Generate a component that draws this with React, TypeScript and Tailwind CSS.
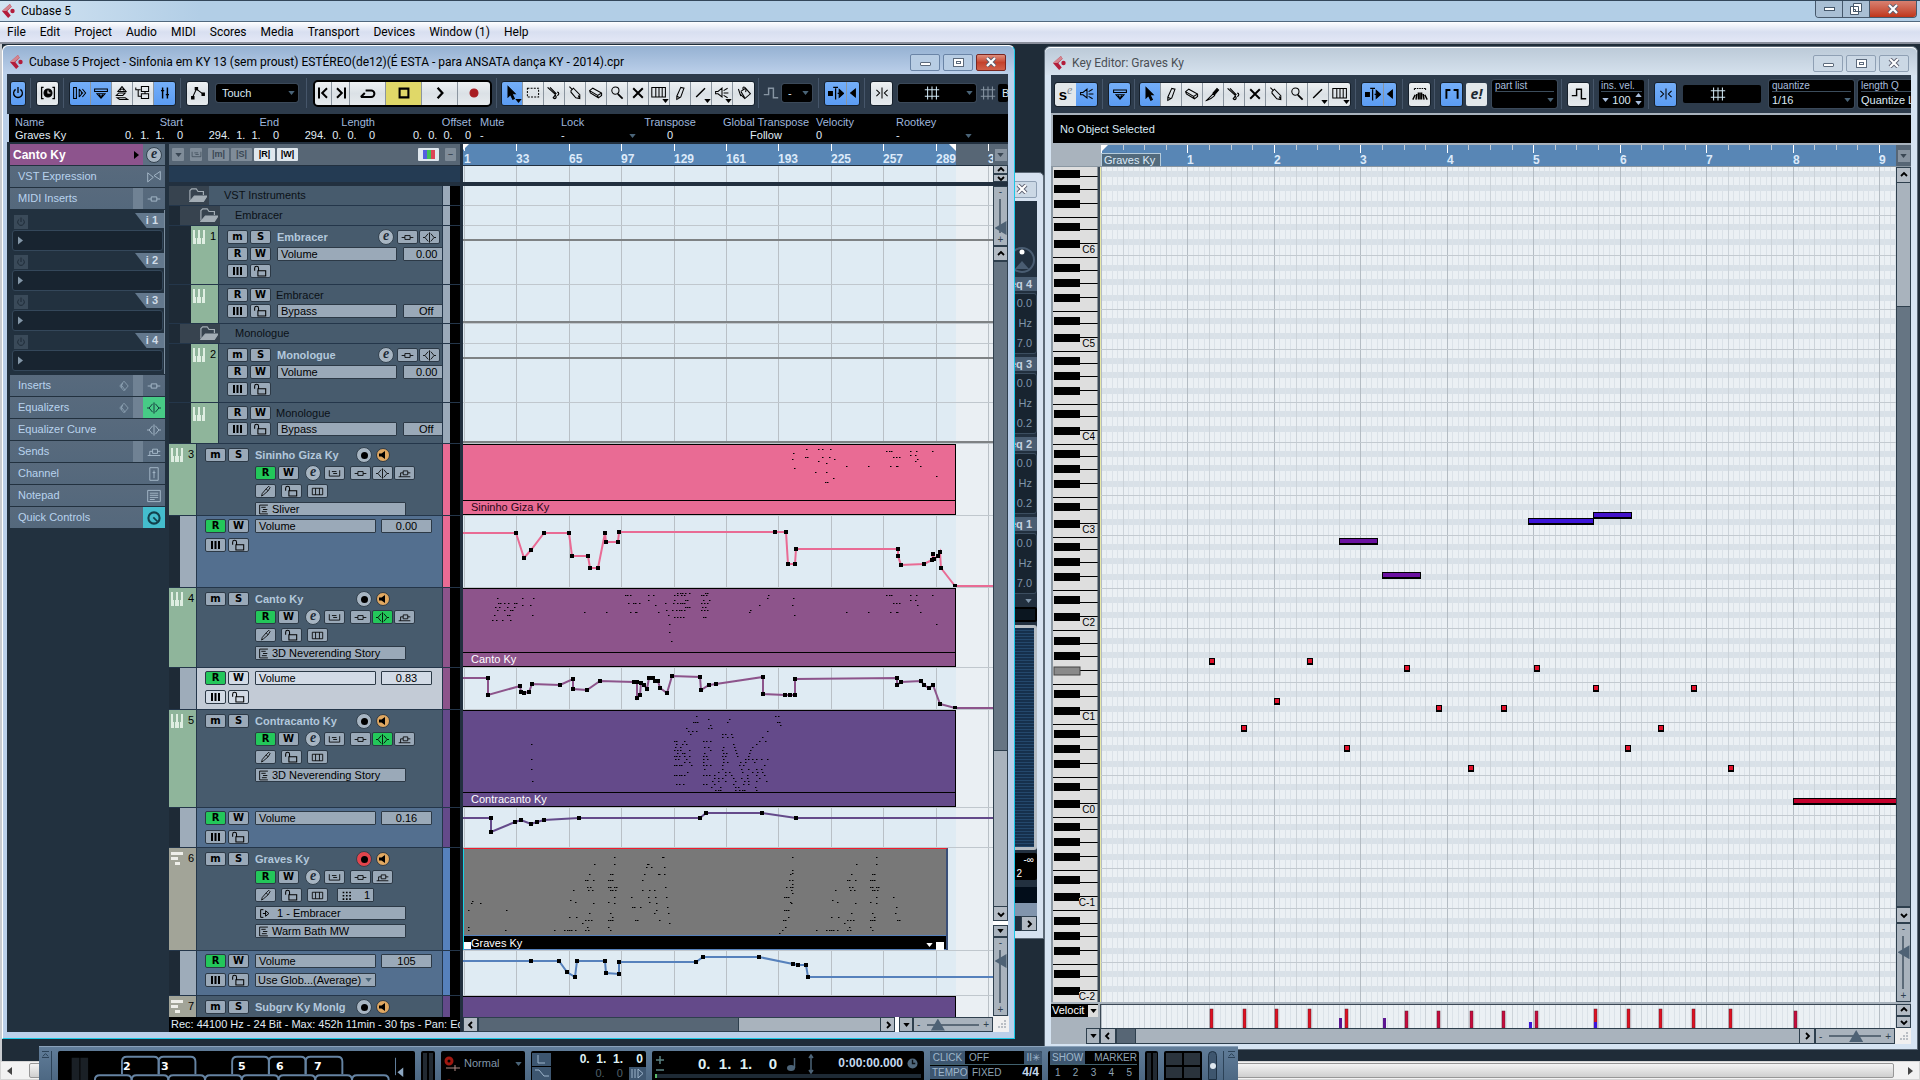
import type { ReactNode } from 'react'
import clsx from 'clsx'

type Point = [number, number]

const menus = ['File', 'Edit', 'Project', 'Audio', 'MIDI', 'Scores', 'Media', 'Transport', 'Devices', 'Window (1)', 'Help']

/* ---------- icons ---------- */

const icons: Record<string, ReactNode> = {
  power: <path d="M7 5.500a5.500 5.500 0 1 0 6 0M10 2.500v7.500" strokeWidth="1.600" />,
  clock: (
    <>
      <path d="M4.500 3H2v14h2.500M15.500 3H18v14h-2.500" strokeWidth="1.600" />
      <circle cx="10" cy="10" r="5" fill="currentColor" />
      <path d="M10 7v3h3" stroke="#fff" />
    </>
  ),
  inspector: <path d="M2 3h3.500v14H2zM9 5v10M9 5l4 5-4 5M13 5l4 5-4 5M11 10h3" />,
  info: <path d="M2 5h16v3H2zM5 11h10l-5 5.500zM8 12a2 2 0 0 0 4 0" />,
  overview: <path d="M5 8l5-6 5 6zM8 7a2 2 0 0 1 4 0M3 13l3-3h8l-3 3zM4 16h10l3 2H7z" />,
  pool: <path d="M1 3v3h6M4 6v8h4M8 2h9v6H8zM8 11h9v6H8zM12.500 8v3" />,
  mixer: <path d="M7 3v14M13 3v14M5 7h4M11 12h4" strokeWidth="1.800" />,
  auto: (
    <>
      <path d="M3 16L8 5l8 6" />
      <path d="M2 14.500h3v3H2zM6.500 3h3v3h-3zM15 10h3v3h-3z" fill="currentColor" />
    </>
  ),
  prev: <path d="M5 3v14M15 4l-6 6 6 6" strokeWidth="2.500" />,
  next: <path d="M15 3v14M5 4l6 6-6 6" strokeWidth="2.500" />,
  loop: <path d="M1 15h13a4 4 0 0 0 0-8H7M6 10l-5 5" strokeWidth="2.500" />,
  stop: <path d="M4.500 4.500h11v11h-11z" strokeWidth="2.600" />,
  play: <path d="M7 3.500l6 6.500-6 6.500" strokeWidth="2.800" />,
  record: <circle cx="10" cy="10" r="5" fill="#a81c22" stroke="#a81c22" />,
  arrow: <path d="M5 2v13l3-3 3 6 2-1-3-6h4z" fill="currentColor" />,
  range: <path d="M3 4h14v11H3z" strokeDasharray="2.500 1.500" />,
  split: <path d="M2 3l10 9M5 3l8 8M14 9a2 2 0 1 1-.1 4M11 13a2 2 0 1 1-2 3l3-4" strokeWidth="1.500" />,
  glue: <path d="M3 2l4 4M5 7l3-3 8 8v5l-5-1-6-7zM14 13l2 4" />,
  erase: <path d="M2 7l4-3 11 6v3l-4 3L3 10zM2 7l10 6 5-3M12 13l1 3" />,
  zoom: (
    <>
      <circle cx="8" cy="7" r="4.500" />
      <path d="M11 11l6 6" strokeWidth="2.200" />
    </>
  ),
  mute: <path d="M4 4l12 12M16 4L4 16" strokeWidth="2.400" />,
  warp: <path d="M1 3h17v12H1zM6 3v12M10 3v12M14 3v12" />,
  pencil: <path d="M8 17l-2 1v-4l5-11 4 1-4 11zM6 14l4 2" />,
  line: <path d="M4 15L15 4" strokeWidth="1.800" />,
  speaker: <path d="M2 8h3l5-4v11l-5-4H2zM12 7l5-3M12 10h6M12 13l5 3" />,
  bucket: <path d="M3 5l3 9M6 8l6-4 6 7-7 6-6-6M6 8l5 8M9 6c-2-6 5-4 3 3" />,
  step: <path d="M1 12h6V4h6v12h6" strokeWidth="1.800" />,
  scroll: (
    <>
      <path d="M0 8h5.500v5H0zM14 5.500l5.500 5-5.500 5z" fill="currentColor" />
      <path d="M9.500 4v14M6.500 3h6M12 10.500h2" strokeWidth="1.600" />
    </>
  ),
  left: <path d="M13 5v10l-6-5z" fill="currentColor" />,
  snap: <path d="M10 3v14M3 6l4 4-4 4M17 6l-4 4 4 4" />,
  grid: <path d="M4.500 2v16M10 2v16M15.500 2v16M1 6h18M1 14h18" />,
  knife: (
    <>
      <path d="M2 18l8-8 2 2c-3 3-6 5-10 6z" />
      <path d="M10 9l5-6 2 2-5 6z" fill="currentColor" />
    </>
  ),
  chords: (
    <>
      <path d="M3 3h14M3 3v3M17 3v3" strokeDasharray="2 1" />
      <path d="M1 17l3-6M5 17l1-7M8 17V8M12 17V8M15 17l-1-7M19 17l-3-6M10 17V8" strokeWidth="1.800" />
    </>
  ),
  parts: <path d="M3 16V5h5M17 16V5h-5" strokeWidth="2.400" />,
  insert: <path d="M1 10h5M14 10h5M6 7h8v6H6z" />,
  eq: <path d="M10 2v16M8 4l-5 6 5 6M12 4l5 6-5 6M0 10h3M17 10h3" />,
  send: <path d="M1 15h18M4 15V9h4M8 6h7v6H8zM15 9h4" />,
  lanes: <path d="M2 5v9h16V5M6 7h7M8 10h6" />,
  brush: <path d="M4 17l1-4 6-7 3 3-7 6zM11 6l4-4 2 2-3 5" />,
  lock: <path d="M1 9V5a3 3 0 0 1 6 0v3M6 9h12v8H6z" strokeWidth="1.600" />,
  film: <path d="M2 5h16v10H2zM7 5v10M13 5v10" />,
  preset: <path d="M18 2H3v16h15M6 6h8M9 10h8M7 14h9" strokeWidth="1.600" />,
  output: <path d="M8 3H3v14h5M7 10h6M12 5l6 5-6 5z" strokeWidth="1.800" />,
  dots: <path d="M3 3h3v3H3zM9 3h3v3H9zM15 3h3v3h-3zM3 9h3v3H3zM9 9h3v3H9zM15 9h3v3h-3zM3 15h3v3H3zM9 15h3v3H9zM15 15h3v3h-3z" fill="currentColor" stroke="none" />,
  folder: (
    <>
      <path d="M1 15V4l2-2h5l2 3h6v4" />
      <path d="M1 16l5-6h14l-4 6z" fill="currentColor" />
    </>
  ),
  expression: <path d="M1 4v13l8-6.500zM19 2v12l-9-6z" />,
  bypass: <path d="M10 2l7 8-7 8-7-8zM6 7v6M8 5l-2 4 6 8" />,
  channel: <path d="M4 1h12v18H4zM10 5v11M8 8h4" />,
  notes: <path d="M1 2h18v16H1zM4 6h12M4 9h12M4 12h12M4 15h7" />,
  knob: (
    <>
      <circle cx="10" cy="10" r="8" strokeWidth="3" />
      <path d="M9 9l6 6" strokeWidth="2.500" />
    </>
  ),
}

function Icon({ name, className = 'size-4' }: { name: string; className?: string }) {
  return (
    <svg viewBox="0 0 20 20" className={clsx('shrink-0', className)} fill="none" stroke="currentColor" strokeWidth="1.300" aria-hidden="true">
      {icons[name]}
    </svg>
  )
}

function Caret({ className = 'text-[#4a6478]' }: { className?: string }) {
  return (
    <svg viewBox="0 0 8 5" className={clsx('h-[4px] w-[7px] shrink-0', className)} aria-hidden="true">
      <path d="M0 0h8L4 5z" fill="currentColor" />
    </svg>
  )
}

function Logo() {
  return (
    <svg viewBox="0 0 16 16" className="size-[14px] shrink-0" aria-hidden="true">
      <path d="M9 0L0 8l7 8 3-3-4-5 5-5z" fill="#b31d3b" />
      <path d="M9 0L0 8h5l6-5z" fill="#d4868f" />
      <circle cx="12" cy="8" r="2.500" fill="#b31d3b" />
    </svg>
  )
}

function Piano() {
  return (
    <svg viewBox="0 0 12 14" className="h-[14px] w-3 shrink-0" aria-hidden="true">
      <path d="M0 0h2v8h1v6H0zM4 8h1V0h2v8h1v6H4zM9 8h1V0h2v14H9z" fill="#dfeee2" />
    </svg>
  )
}

/* ---------- window parts ---------- */

function Cell({ icon, on, className, drop }: { icon: string; on?: boolean; className?: string; drop?: boolean }) {
  return (
    <button
      aria-label={icon}
      className={clsx(
        'relative flex h-[23px] items-center justify-center border-r border-[#8b959f] text-black last:border-r-0',
        on ? 'bg-linear-to-b from-[#74aef8] to-[#5b9cf3]' : 'bg-linear-to-b from-[#eef1f3] via-[#dbe1e6] to-[#e6eaed]',
        className ?? 'w-[21px]',
      )}
    >
      <Icon name={icon} />
      {drop && <Caret className="absolute right-0 bottom-[2px] text-black" />}
    </button>
  )
}

function Group({ children, className }: { children: ReactNode; className?: string }) {
  return <div className={clsx('flex shrink-0 overflow-hidden rounded-[2px] outline outline-[#16202b]', className)}>{children}</div>
}

function Sep({ className = 'mr-[6px] ml-[5px]' }: { className?: string }) {
  return <span className={clsx('h-[30px] w-px shrink-0 bg-[#46566a]', className)} />
}

function DropBox({ label, options, className }: { label: string; options: string[]; className?: string }) {
  return (
    <div className={clsx('relative flex h-[18px] shrink-0 items-center rounded-[2px] bg-black outline outline-[#3b4959]', className)}>
      <select aria-label={label} className="h-full w-full appearance-none bg-transparent pl-[6px] text-[11px] text-[#dbe9f4]">
        {options.map((option) => (
          <option key={option}>{option}</option>
        ))}
      </select>
      <Caret className="absolute right-[3px] text-[#4a6478]" />
    </div>
  )
}

function StackedDrop({ label, value, className }: { label: string; value: string; className?: string }) {
  return (
    <label className={clsx('relative flex h-[28px] shrink-0 flex-col rounded-[2px] bg-black px-[3px] text-[10px] leading-[11px] text-[#a9bedd] outline outline-[#3b4959]', className)}>
      <span className="whitespace-nowrap border-b border-[#3c4d5c]">{label}</span>
      <select className="h-[16px] w-full appearance-none bg-transparent text-[11px] text-[#dbe9f4]">
        <option>{value}</option>
      </select>
      <Caret className="absolute right-[3px] bottom-[6px] text-[#4a6478]" />
    </label>
  )
}

function WindowButtons({ active }: { active?: boolean }) {
  const base = 'flex h-[17px] w-[30px] items-center justify-center rounded-[2px] border'
  const plain = active ? 'border-[#6a84a6] bg-[#b8cde4]' : 'border-[#8fa0b4] bg-[#cbd8e5]'
  return (
    <div className="ml-auto flex gap-[3px]">
      <button aria-label="Minimize" className={clsx(base, plain)}>
        <span className="mt-1 h-[4px] w-[11px] rounded-[1px] border border-[#5c6a7c] bg-white" />
      </button>
      <button aria-label="Maximize" className={clsx(base, plain)}>
        <span className="flex h-[9px] w-[11px] items-center justify-center border border-[#5c6a7c] bg-white">
          <span className="h-[3px] w-[5px] border border-[#5c6a7c]" />
        </span>
      </button>
      <button aria-label="Close" className={clsx(base, active ? 'border-[#7a2620] bg-linear-to-b from-[#dd8d7c] via-[#c4422c] to-[#d0604a]' : plain)}>
        <CloseMark />
      </button>
    </div>
  )
}

function CloseMark() {
  return (
    <svg viewBox="0 0 12 10" className="h-[10px] w-3" aria-hidden="true">
      <path d="M2 1l8 8M10 1L2 9" stroke="#5c5f70" strokeWidth="4" />
      <path d="M2 1l8 8M10 1L2 9" stroke="#fff" strokeWidth="2.200" />
    </svg>
  )
}

function ScrollButton({ dir, className }: { dir: 'up' | 'down' | 'left' | 'right'; className?: string }) {
  const paths = { up: 'M2 6l3-3 3 3', down: 'M2 4l3 3 3-3', left: 'M6 2L3 5l3 3', right: 'M4 2l3 3-3 3' }
  return (
    <button aria-label={'Scroll ' + dir} className={clsx('flex shrink-0 items-center justify-center border border-[#2e3f4d] bg-[#b3bbc4]', className)}>
      <svg viewBox="0 0 10 10" className="size-[10px]" fill="none" stroke="#000" strokeWidth="1.800" aria-hidden="true">
        <path d={paths[dir]} />
      </svg>
    </button>
  )
}

function ZoomV({ className, value }: { className?: string; value: number }) {
  return (
    <div className={clsx('relative flex shrink-0 flex-col items-center border border-[#2e3f4d] bg-[#a9b3bd] text-[10px] leading-[10px] text-[#2e3f4d]', className)}>
      <span className="absolute inset-y-[12px] left-[5px] w-[2px] bg-[#5b6a78]" />
      <span>-</span>
      <input
        type="range"
        aria-label="Vertical zoom"
        defaultValue={value}
        className="relative min-h-0 w-[13px] flex-1 appearance-none bg-transparent [writing-mode:vertical-lr] [&::-webkit-slider-thumb]:h-[14px] [&::-webkit-slider-thumb]:w-[12px] [&::-webkit-slider-thumb]:appearance-none [&::-webkit-slider-thumb]:bg-[#4e6275] [&::-webkit-slider-thumb]:[clip-path:polygon(0_50%,100%_0,100%_100%)]"
      />
      <span>+</span>
    </div>
  )
}

function ZoomH({ value }: { value: number }) {
  return (
    <div className="relative flex w-[80px] shrink-0 items-center justify-between border border-[#2e3f4d] bg-[#a9b3bd] px-[3px] text-[10px] text-[#2e3f4d]">
      <span className="absolute inset-x-[13px] top-[6px] h-[2px] bg-[#5b6a78]" />
      <span>-</span>
      <input
        type="range"
        aria-label="Horizontal zoom"
        defaultValue={value}
        className="relative mx-1 h-[13px] min-w-0 flex-1 appearance-none bg-transparent [&::-webkit-slider-thumb]:h-[12px] [&::-webkit-slider-thumb]:w-[14px] [&::-webkit-slider-thumb]:appearance-none [&::-webkit-slider-thumb]:bg-[#4e6275] [&::-webkit-slider-thumb]:[clip-path:polygon(50%_0,100%_100%,0_100%)]"
      />
      <span>+</span>
    </div>
  )
}

function Grip() {
  return (
    <div className="w-[16px] shrink-0 bg-[#f0f0f0] p-[2px]">
      <svg viewBox="0 0 12 12" className="size-3" aria-hidden="true">
        <path d="M9 2h2v2H9zM6 5h2v2H6zM9 5h2v2H9zM3 8h2v2H3zM6 8h2v2H6zM9 8h2v2H9z" fill="#b9bec4" />
      </svg>
    </div>
  )
}

/* ---------- project window ---------- */

function ProjectToolbar() {
  return (
    <div className="flex h-[40px] shrink-0 items-center overflow-hidden bg-[#2d3b4b] pb-[2px] pl-[4px]">
      <Group><Cell icon="power" on className="w-[14px]" /></Group>
      <Sep />
      <Group><Cell icon="clock" /></Group>
      <Sep />
      <Group>
        <Cell icon="inspector" on />
        <Cell icon="info" on />
        <Cell icon="overview" />
        <Cell icon="pool" />
        <Cell icon="mixer" on />
      </Group>
      <Sep />
      <Group><Cell icon="auto" /></Group>
      <DropBox label="Automation mode" options={['Touch', 'Auto-Latch', 'Cross-Over']} className="ml-2 w-[82px]" />
      <Sep className="mr-[6px] ml-[8px]" />
      <div className="flex shrink-0 overflow-hidden rounded-[5px] border-2 border-black">
        <Cell icon="prev" className="w-[17px]" />
        <Cell icon="next" className="w-[18px]" />
        <Cell icon="loop" className="w-[36px]" />
        <button aria-label="Stop" className="flex h-[23px] w-[36px] items-center justify-center border-r border-[#8b959f] bg-[#e0d868] text-black">
          <Icon name="stop" />
        </button>
        <Cell icon="play" className="w-[36px]" />
        <Cell icon="record" className="w-[32px]" />
      </div>
      <Sep className="mr-[5px] ml-[4px]" />
      <Group>
        <Cell icon="arrow" on drop />
        <Cell icon="range" />
        <Cell icon="split" />
        <Cell icon="glue" />
        <Cell icon="erase" />
        <Cell icon="zoom" />
        <Cell icon="mute" />
        <Cell icon="warp" drop />
        <Cell icon="pencil" />
        <Cell icon="line" drop />
        <Cell icon="speaker" drop />
        <Cell icon="bucket" />
      </Group>
      <Sep className="mr-[4px] ml-[4px]" />
      <Icon name="step" className="size-4 text-[#8795a3]" />
      <DropBox label="Nudge" options={['-']} className="ml-[3px] w-[30px]" />
      <Sep className="mx-[6px]" />
      <Group>
        <Cell icon="scroll" on className="w-[22px]" />
        <Cell icon="left" on className="w-[12px]" />
      </Group>
      <Sep />
      <Group><Cell icon="snap" /></Group>
      <button aria-label="Grid type" className="ml-[6px] flex h-[18px] w-[78px] shrink-0 items-center justify-end gap-[26px] rounded-[2px] bg-black pr-[3px] text-[#cfe6f2] outline outline-[#3b4959]">
        <Icon name="grid" />
        <Caret />
      </button>
      <Icon name="grid" className="ml-1 size-4 text-[#8795a3]" />
      <span className="ml-[2px] h-[18px] w-[10px] shrink-0 overflow-hidden rounded-[2px] bg-black pl-[4px] text-[11px] leading-[18px] text-[#dbe9f4]">B</span>
    </div>
  )
}

const infoFields = [
  { label: 'Name', value: 'Graves Ky', box: 'w-[80px]' },
  { label: 'Start', value: '0.  1.  1.    0', box: 'w-[88px] text-right' },
  { label: 'End', value: '294.  1.  1.    0', box: 'w-[96px] text-right' },
  { label: 'Length', value: '294.  0.  0.    0', box: 'w-[96px] text-right' },
  { label: 'Offset', value: '0.  0.  0.    0', box: 'w-[96px] text-right' },
  { label: 'Mute', value: '-', box: 'w-[90px] pl-[9px]' },
  { label: 'Lock', value: '-', box: 'w-[75px]', drop: true },
  { label: 'Transpose', value: '0', box: 'w-[68px] text-center' },
  { label: 'Global Transpose', value: 'Follow', box: 'w-[112px] pl-[12px] text-center' },
  { label: 'Velocity', value: '0', box: 'w-[80px]' },
  { label: 'Rootkey', value: '-', box: 'w-[76px]', drop: true },
]

function InfoLine() {
  return (
    <dl className="ml-[2px] flex h-[28px] shrink-0 overflow-hidden bg-black pt-[2px] pl-[6px] text-[11px] leading-[13px]">
      {infoFields.map((field) => (
        <div key={field.label} className={clsx('shrink-0 whitespace-pre', field.box)}>
          <dt className="text-[#9eb6dc]">{field.label}</dt>
          <dd className={clsx('text-[#e0ecf5]', field.drop && 'flex items-center justify-between')}>
            {field.value}
            {field.drop && <Caret />}
          </dd>
        </div>
      ))}
    </dl>
  )
}

const inspectorTabs = [
  { label: 'Inserts', icon: 'insert', bypass: true, tab: true },
  { label: 'Equalizers', icon: 'eq', bypass: true, tab: true, on: 'bg-[#47cb86] text-[#12303a]' },
  { label: 'Equalizer Curve', icon: 'eq' },
  { label: 'Sends', icon: 'send', tab: true },
  { label: 'Channel', icon: 'channel' },
  { label: 'Notepad', icon: 'notes' },
  { label: 'Quick Controls', icon: 'knob', on: 'bg-[#44bdcd] text-[#12404c]' },
]

function InspectorTab({ label, icon, bypass, tab, on }: { label: string; icon: string; bypass?: boolean; tab?: boolean; on?: string }) {
  return (
    <button className="mb-px flex h-[21px] w-full items-center bg-linear-to-b from-[#586a7d] to-[#54687c] text-left text-[11px] text-[#b9d3ee]">
      <span className="flex-1 pl-[8px]">{label}</span>
      {bypass && <Icon name="bypass" className="mr-[3px] size-3 text-[#93a7b8]" />}
      {tab && <span className="h-full w-[10px] bg-[#708294]" />}
      <span className={clsx('flex h-full w-[22px] items-center justify-center', on ?? 'text-[#a9bccc]')}>
        <Icon name={icon} className="size-[14px]" />
      </span>
    </button>
  )
}

function Inspector() {
  return (
    <aside className="w-[162px] shrink-0 bg-[#22313f] pr-[4px] pl-[3px]">
      <div className="mb-px flex h-[21px] bg-[#5d7082]">
        <h2 className="flex flex-1 items-center justify-between bg-[#8d548d] pr-[4px] pl-[3px] text-[12px] font-bold text-white">
          Canto Ky
          <svg viewBox="0 0 5 8" className="h-2 w-[5px]" aria-hidden="true"><path d="M0 0l5 4-5 4z" /></svg>
        </h2>
        <div className="flex w-[22px] items-center justify-center"><EditBadge /></div>
      </div>
      <InspectorTab label="VST Expression" icon="expression" />
      <InspectorTab label="MIDI Inserts" icon="insert" tab />
      <div className="mb-[1px] border-r border-[#7b8d9e] pt-[3px] pb-px">
        {[1, 2, 3, 4].map((slot) => (
          <div key={slot} className="h-[40px]">
            <div className="flex h-[17px] items-start justify-between pl-[4px]">
              <button aria-label={'Insert ' + slot + ' power'} className="mt-[2px] flex size-[14px] items-center justify-center bg-[#3a4a59] text-[#1c2935]">
                <Icon name="power" className="size-3" />
              </button>
              <span className="h-[15px] w-[29px] bg-[#63788d] pr-[6px] text-right text-[11px] leading-[15px] font-bold text-[#d0dce8] [clip-path:polygon(0_0,100%_0,100%_100%,40%_100%)]">
                i {slot}
              </span>
            </div>
            <button aria-label={'Insert slot ' + slot} className="ml-[2px] flex h-[21px] w-[151px] items-center rounded-[3px] border border-[#34475a] bg-[#182430] pl-[5px]">
              <svg viewBox="0 0 5 8" className="h-[9px] w-[5px]" aria-hidden="true"><path d="M0 0l5 4-5 4z" fill="#8497a8" /></svg>
            </button>
          </div>
        ))}
      </div>
      {inspectorTabs.map((tab) => (
        <InspectorTab key={tab.label} {...tab} />
      ))}
    </aside>
  )
}

function EditBadge() {
  return (
    <button aria-label="Edit channel settings" className="flex size-[16px] shrink-0 items-center justify-center rounded-full border border-[#33424f] bg-[#a7b5c2] pb-[2px] font-['Liberation_Serif'] text-[14px] leading-none font-bold text-[#1e2b37] italic">
      e
    </button>
  )
}

function Mini({ children, on, light, label }: { children: ReactNode; on?: boolean; light?: boolean; label?: string }) {
  return (
    <button
      aria-label={label}
      className={clsx(
        "flex h-[14px] w-[21px] shrink-0 items-center justify-center rounded-[2px] border border-[#2c3946] font-['DejaVu_Sans'] text-[10px] leading-none font-bold text-black",
        on ? 'bg-[#23c75a]' : light ? 'bg-[#d3dbe6]' : 'bg-[#9aa9b8]',
      )}
    >
      {children}
    </button>
  )
}

function MiniIcon({ icon, on, light }: { icon: string; on?: boolean; light?: boolean }) {
  return (
    <Mini on={on} light={light} label={icon}>
      <Icon name={icon} className="size-[13px]" />
    </Mini>
  )
}

function Field({ children, className, light }: { children: ReactNode; className?: string; light?: boolean }) {
  return (
    <button className={clsx('flex h-[14px] shrink-0 items-center rounded-[1px] border border-[#2c3946] text-left text-[11px] leading-none whitespace-nowrap text-black', light ? 'bg-[#d3dbe6]' : 'bg-[#9aa9b8]', className)}>
      {children}
    </button>
  )
}

const MS = () => (
  <div className="flex shrink-0 gap-[2px]">
    <Mini>m</Mini>
    <Mini>S</Mini>
  </div>
)

const RW = ({ on, light }: { on?: boolean; light?: boolean }) => (
  <div className="flex shrink-0 gap-[2px]">
    <Mini on={on}>R</Mini>
    <Mini light={light}>W</Mini>
  </div>
)

const Lanes = ({ light }: { light?: boolean }) => (
  <div className="flex shrink-0 gap-[2px]">
    <Mini light={light} label="Lanes">
      <svg viewBox="0 0 9 8" className="h-2 w-[9px]" aria-hidden="true"><path d="M0 0h2v8H0zM3.500 0h2v8h-2zM7 0h2v8H7z" /></svg>
    </Mini>
    <MiniIcon icon="lock" light={light} />
  </div>
)

function Row({ height, indent, lead, tone = 'bg-[#475b6d]', strip, children }: { height: string; indent?: string; lead: ReactNode; tone?: string; strip: string; children: ReactNode }) {
  return (
    <div className={clsx('flex shrink-0 border-b border-[#24364a] bg-[#1e2a36]', height)}>
      {indent && <div className={indent} />}
      {lead}
      <div className={clsx('flex min-w-0 flex-1 flex-col overflow-hidden border-r border-[#24364a]', tone)}>{children}</div>
      <div className={clsx('w-[7px]', strip)} />
      <div className="w-[10px] bg-black" />
    </div>
  )
}

function FolderRow({ name, indent }: { name: string; indent?: string }) {
  return (
    <Row
      height="h-[20px]"
      indent={indent}
      strip="bg-[#9aa9b9]"
      lead={<div className="flex w-[40px] justify-end bg-[#37434f] pt-[1px] pr-[2px] text-[#a3adb5]"><Icon name="folder" className="size-[18px]" /></div>}
    >
      <span className="pl-[15px] text-[11px] leading-[18px] text-[#0b1117]">{name}</span>
    </Row>
  )
}

function Lead({ n, midi }: { n?: number; midi?: boolean }) {
  return (
    <div className={clsx('flex w-[28px] shrink-0 justify-between border-r border-[#24364a] pt-[4px] pr-[2px] pl-[2px] text-[11px] leading-[13px] text-black', midi ? 'bg-[#a2a498]' : 'bg-[#8fb59b]')}>
      {midi ? (
        <svg viewBox="0 0 12 14" className="h-[14px] w-3" aria-hidden="true"><path d="M0 0h12v3H0zM0 5h7v3H0zM4 10h5v3H4z" fill="#efefea" /></svg>
      ) : (
        <Piano />
      )}
      {n}
    </div>
  )
}

function InstrumentRows({ n, name, last }: { n: number; name: string; last?: boolean }) {
  return (
    <>
      <Row height="h-[59px]" indent="w-[22px]" lead={<Lead n={n} />} strip="bg-[#9aa9b9]">
        <div className="flex flex-col gap-[3px] pt-[4px] pl-[8px]">
          <div className="flex h-[14px] items-center">
            <MS />
            <span className="ml-[6px] w-[101px] shrink-0 text-[11px] font-bold text-[#b3c8dc]">{name}</span>
            <EditBadge />
            <div className="ml-[3px] flex gap-px">
              <MiniIcon icon="insert" />
              <MiniIcon icon="eq" />
            </div>
          </div>
          <div className="flex gap-[6px]">
            <RW />
            <Field className="w-[120px] pl-[3px]">Volume</Field>
            <Field className="w-[52px] pl-[12px]">0.00</Field>
          </div>
          <Lanes />
        </div>
      </Row>
      <Row height={last ? 'h-[41px]' : 'h-[39px]'} indent="w-[22px]" lead={<Lead />} strip="bg-[#9aa9b9]">
        <div className="flex flex-col gap-[2px] pt-[3px] pl-[8px]">
          <div className="flex items-center gap-[5px]">
            <RW />
            <span className="text-[11px] leading-[14px] text-[#0b1117]">{name}</span>
          </div>
          <div className="flex gap-[6px]">
            <Lanes />
            <Field className="w-[120px] pl-[3px]">Bypass</Field>
            <Field className="w-[52px] pl-[15px]">Off</Field>
          </div>
        </div>
      </Row>
    </>
  )
}

interface TrackProps {
  n: number
  name: string
  height: string
  strip: string
  preset?: string
  eqOn?: boolean
  midi?: boolean
  armed?: boolean
  folded?: boolean
}

function TrackRow({ n, name, height, strip, preset, eqOn, midi, armed, folded }: TrackProps) {
  return (
    <Row height={height} lead={<Lead n={n} midi={midi} />} strip={strip}>
      <div className="flex flex-col gap-[4px] pt-[4px] pl-[8px]">
        <div className="flex h-[14px] items-center">
          <MS />
          <span className="ml-[6px] w-[101px] shrink-0 text-[11px] font-bold whitespace-nowrap text-[#b3c8dc]">{name}</span>
          <button aria-label="Record enable" className={clsx('flex size-[16px] items-center justify-center rounded-full border border-[#33424f]', armed ? 'bg-[#e2444c]' : 'bg-[#a7b5c2]')}>
            <span className="size-[7px] rounded-full bg-black" />
          </button>
          <button aria-label="Monitor" className="ml-[4px] flex size-[14px] items-center justify-center rounded-full border border-[#2c3946] bg-[#dfa761]">
            <svg viewBox="0 0 8 8" className="size-2" aria-hidden="true"><path d="M0 2.500h2.500L6 0v8L2.500 5.500H0z" /></svg>
          </button>
        </div>
        {!folded && (
          <>
            <div className="flex h-[14px] items-center pl-[50px]">
              <RW on />
              <div className="mr-[3px] ml-[6px] flex h-[14px] items-center"><EditBadge /></div>
              <MiniIcon icon="lanes" />
              <div className="ml-[5px] flex gap-px">
                <MiniIcon icon="insert" />
                {!midi && <MiniIcon icon="eq" on={eqOn} />}
                <MiniIcon icon="send" />
              </div>
            </div>
            <div className="flex gap-[5px] pl-[50px]">
              <MiniIcon icon="brush" />
              <MiniIcon icon="lock" />
              <MiniIcon icon="film" />
              {midi && (
                <Field className="ml-[4px] w-[37px] justify-between px-[3px]">
                  <Icon name="dots" className="size-[11px]" />1
                </Field>
              )}
            </div>
            {midi && (
              <Field className="ml-[50px] w-[151px] gap-[7px] pl-[3px]">
                <Icon name="output" className="size-[11px]" />1 - Embracer
              </Field>
            )}
            <Field className="ml-[50px] w-[151px] gap-[3px] pl-[2px]">
              <Icon name="preset" className="size-[11px]" />
              {preset}
            </Field>
          </>
        )}
      </div>
    </Row>
  )
}

function VolumeRow({ height, value, strip, light, average }: { height: string; value: string; strip: string; light?: boolean; average?: boolean }) {
  return (
    <Row height={height} indent="w-[11px]" lead={<div className="w-[17px] border-r border-[#24364a] bg-[#9eacba]" />} tone={light ? 'bg-[#c3cbd6]' : 'bg-[#536f8f]'} strip={strip}>
      <div className="flex flex-col gap-[5px] pt-[3px] pl-[8px]">
        <div className="flex gap-[6px]">
          <RW on light={light} />
          <Field light={light} className="w-[121px] pl-[3px]">Volume</Field>
          <Field light={light} className="-ml-px w-[51px] justify-center">{value}</Field>
        </div>
        <div className="flex gap-[6px]">
          <Lanes light={light} />
          {average && (
            <Field className="w-[121px] justify-between pr-[3px] pl-[2px]">
              Use Glob...(Average) <Caret />
            </Field>
          )}
        </div>
      </div>
    </Row>
  )
}

function TrackList() {
  const small = 'flex h-[13px] items-center justify-center rounded-[1px] font-bold text-[9px] leading-none'
  return (
    <section className="flex w-[291px] shrink-0 flex-col overflow-hidden">
      <div className="flex h-[21px] shrink-0 items-center gap-[2px] bg-[#576675] pr-[4px] pl-[3px] text-[#3a4754]">
        <button aria-label="Track types" className={clsx(small, 'mr-[4px] w-[12px] bg-[#7f8c99]')}><Caret className="text-[#3a4754]" /></button>
        <button aria-label="Edit in place" className={clsx(small, 'mr-[4px] w-[12px] bg-[#7f8c99]')}><Icon name="lanes" className="size-[11px]" /></button>
        <button className={clsx(small, 'w-[21px] bg-[#7f8c99]')}>|m|</button>
        <button className={clsx(small, 'w-[21px] bg-[#7f8c99]')}>|S|</button>
        <button className={clsx(small, 'w-[21px] bg-[#dfe7ee] text-black')}>|R|</button>
        <button className={clsx(small, 'w-[21px] bg-[#dfe7ee] text-black')}>|W|</button>
        <button aria-label="Track colors" className={clsx(small, 'ml-auto w-[21px] bg-[#dfe7ee]')}>
          <span className="h-[9px] w-[4px] bg-[#5560e0]" />
          <span className="h-[9px] w-[4px] bg-[#42c057]" />
          <span className="h-[9px] w-[4px] bg-[#dd4458]" />
        </button>
        <button aria-label="Divide list" className={clsx(small, 'ml-[4px] w-[11px] bg-[#7f8c99]')}>–</button>
      </div>
      <div className="h-[21px] shrink-0 border-t border-b-4 border-[#22303f] bg-[#243b53]" />
      <div className="flex min-h-0 flex-1 flex-col overflow-hidden">
        <FolderRow name="VST Instruments" />
        <FolderRow name="Embracer" indent="w-[11px]" />
        <InstrumentRows n={1} name="Embracer" />
        <FolderRow name="Monologue" indent="w-[11px]" />
        <InstrumentRows n={2} name="Monologue" last />
        <TrackRow n={3} name="Sininho Giza Ky" height="h-[72px]" strip="bg-[#e96b94]" preset="Sliver" />
        <VolumeRow height="h-[72px]" value="0.00" strip="bg-[#e96b94]" />
        <TrackRow n={4} name="Canto Ky" height="h-[80px]" strip="bg-[#8d548b]" preset="3D Neverending Story" eqOn />
        <VolumeRow height="h-[42px]" value="0.83" strip="bg-[#8d548b]" light />
        <TrackRow n={5} name="Contracanto Ky" height="h-[98px]" strip="bg-[#644a8a]" preset="3D Neverending Story" eqOn />
        <VolumeRow height="h-[40px]" value="0.16" strip="bg-[#644a8a]" />
        <TrackRow n={6} name="Graves Ky" height="h-[103px]" strip="bg-[#5681bc]" preset="Warm Bath MW" midi armed />
        <VolumeRow height="h-[45px]" value="105" strip="bg-[#5681bc]" average />
        <TrackRow n={7} name="Subgrv Ky Monlg" height="h-[24px]" strip="bg-[#644a8a]" midi folded />
      </div>
      <p className="h-[15px] shrink-0 overflow-hidden bg-black pl-[2px] text-[11px] leading-[15px] whitespace-nowrap text-[#e0ecf5]">
        Rec: 44100 Hz - 24 Bit - Max: 452h 11min - 30 fps - Pan: Equal Power
      </p>
    </section>
  )
}

/* ---------- arrangement data ---------- */

const sininhoCurve: Point[] = [[0, 17], [53, 17], [61, 42], [68, 34], [81, 17], [106, 17], [109, 40], [125, 40], [127, 52], [135, 52], [142, 17], [143, 26], [155, 26], [156, 16], [312, 16], [323, 16], [325, 48], [332, 48], [333, 33], [435, 33], [435, 40], [438, 49], [461, 48], [469, 44], [470, 38], [471, 43], [475, 40], [477, 36], [478, 52], [492, 70]]
const cantoCurve: Point[] = [[0, 10], [25, 10], [25, 27], [57, 18], [58, 24], [61, 25], [66, 24], [69, 16], [97, 17], [110, 11], [110, 21], [124, 22], [137, 13], [171, 14], [174, 14], [174, 30], [177, 27], [178, 15], [181, 17], [184, 21], [186, 10], [190, 10], [192, 13], [195, 13], [197, 20], [204, 25], [209, 8], [237, 9], [238, 22], [246, 17], [253, 16], [300, 9], [300, 26], [322, 27], [327, 27], [332, 27], [332, 11], [434, 10], [434, 17], [438, 14], [458, 13], [461, 17], [466, 20], [470, 17], [477, 36], [492, 40]]
const contraCurve: Point[] = [[0, 10], [28, 10], [28, 24], [52, 14], [58, 12], [68, 16], [74, 14], [81, 12], [116, 10], [237, 10], [243, 5], [299, 5], [333, 10]]
const gravesCurve: Point[] = [[0, 10], [68, 10], [96, 10], [104, 21], [112, 26], [114, 10], [142, 10], [143, 22], [156, 23], [156, 11], [233, 11], [240, 6], [296, 6], [330, 13], [335, 14], [343, 14], [345, 26]]

// rows of [y, ...x positions]
const sininhoNotes = [[4, 343, 355, 359, 367], [6, 423, 426, 428, 447, 453, 469], [8, 330], [10, 447, 452], [12, 342, 344, 359, 366, 430, 433, 436], [14, 329, 371, 454], [16, 355, 452], [18, 363], [21, 383, 405, 427, 433, 434, 457], [23, 331], [27, 352, 363], [31, 473], [33, 370], [37, 362, 364]]
const cantoNotes = [[4, 214, 217, 219, 222, 226, 242, 244], [6, 162, 164, 167, 185, 190, 211, 214, 218, 221, 238, 240, 243, 305, 423, 426, 428, 447, 453, 469], [9, 34, 59, 70, 304, 330], [11, 185, 211, 222, 224, 240, 246, 447, 452], [14, 35, 37, 41, 45, 51, 53, 165, 170, 172, 176, 202, 210, 214, 217, 219, 221, 238, 241, 244, 430, 433, 436], [16, 59, 67, 192, 296, 329, 454], [18, 32, 36, 44, 51, 222, 224, 226, 239, 242], [21, 34, 41, 47, 49, 203, 209, 213, 216, 218, 221, 238, 241, 244, 287], [23, 121, 143, 167, 172, 173, 195, 286, 383, 405, 427, 433, 434, 457], [26, 31, 44, 46, 69, 205, 331], [28, 211, 214, 217, 220, 240, 242], [31, 29, 33, 39, 47], [35, 206, 473], [43, 206], [52, 208]]
const contraNotes = [[5, 233, 312, 315], [8, 245, 266], [11, 230, 232, 234, 264, 314, 316], [14, 247, 317], [17, 223, 245, 248], [20, 225, 229, 233, 304], [23, 227, 259, 262, 268], [26, 259, 264, 269, 299], [30, 211, 213, 221, 240, 243, 247, 296, 302], [33, 68, 213, 219, 223, 270, 293], [36, 212, 217, 241, 245, 260, 271, 289], [39, 211, 214, 217, 226, 247, 259, 272, 287], [42, 214, 219, 221, 241, 260, 263, 273, 286], [45, 211, 213, 216, 221, 226, 240, 243, 259, 262, 274, 285], [48, 68, 212, 215, 223, 240, 244, 260, 282, 285, 289, 293, 298, 304], [51, 221, 226, 240, 260, 264, 277, 282, 291], [54, 211, 213, 216, 218, 228, 240, 243, 247, 259, 276, 280, 301], [58, 68, 241, 259, 278, 285, 293, 298], [61, 224, 255, 262, 266, 279, 289, 294, 299], [64, 211, 213, 216, 218, 221, 240, 243, 246, 251, 262, 268, 284, 293, 301], [67, 251, 255, 259, 270, 278, 284, 296], [70, 69, 249, 255, 262, 272, 281, 285, 293, 303], [73, 213, 216, 220, 240, 243, 251, 270, 280, 285], [76, 248, 257, 272, 275, 292], [79, 252, 255, 257, 272, 276, 279, 281, 293]]
const climb = [[8, 150], [15, 130, 150], [25, 125, 146, 148], [31, 121, 123, 129, 144, 146, 148], [38, 123, 126, 144, 146, 150, 152], [41, 109, 124, 128, 146, 148, 151], [48, 150], [51, 106], [53, 111, 144], [54, 129, 150], [64, 125, 146], [68, 105, 112, 148], [71, 121, 124, 127, 144, 146, 148], [74, 118], [78, 123, 144], [81, 90, 100, 103, 105, 107, 111, 121, 124, 146]]
const gravesNotes = [
  ...climb,
  ...climb.map(([y, ...xs]) => [y, ...xs.map((x) => x + 262)]),
  [8, 198, 199, 328], [15, 183, 184], [18, 182, 187, 200], [21, 328], [24, 328], [25, 180, 194, 195, 200, 326], [31, 178, 325, 328], [35, 328], [38, 201, 322, 326, 328], [41, 178, 185, 190, 327], [44, 328], [48, 167, 184, 191, 202, 320, 322, 324, 429], [52, 8], [53, 185, 326], [54, 7, 16, 192, 327], [58, 168, 170, 176, 203, 432], [61, 4, 42, 192, 320, 322, 324], [64, 190, 204, 431], [68, 324], [71, 171, 173, 195, 319, 321, 433, 435], [74, 205], [78, 4, 321], [81, 4, 41, 318], [84, 315],
]

function Notes({ rows }: { rows: number[][] }) {
  return (
    <svg className="absolute inset-0 size-full" aria-hidden="true">
      {rows.flatMap(([y, ...xs], i) => xs.map((x, j) => <rect key={i + '-' + j} x={x} y={y} width="1.500" height="1" />))}
    </svg>
  )
}

function Clip({ height, name, color, notes, dark }: { height: string; name?: string; color: string; notes?: number[][]; dark?: boolean }) {
  return (
    <div className={clsx('shrink-0 border-b border-[#c0c7cd]', height)}>
      <div className={clsx('relative flex h-full w-[493px] flex-col border-y border-r border-black', color)}>
        {notes && <Notes rows={notes} />}
        {name && (
          <span className={clsx('mt-auto h-[14px] border-t border-black pl-[8px] text-[11px] leading-[13px]', dark ? 'text-[#2a0614]' : 'text-white')}>{name}</span>
        )}
      </div>
    </div>
  )
}

function Curve({ height, points, color }: { height: string; points: Point[]; color: string }) {
  const last = points[points.length - 1]
  return (
    <div className={clsx('relative shrink-0 border-b border-[#c0c7cd]', height)}>
      <svg className="size-full overflow-hidden" aria-hidden="true">
        <polyline points={points.join(' ') + ' 2000,' + last[1]} fill="none" stroke={color} strokeWidth="2" />
        {points.slice(1).map(([x, y], i) => (
          <rect key={i} x={x - 2} y={y - 2} width="4" height="4" />
        ))}
      </svg>
    </div>
  )
}

// empty lane with the static automation line at the given offset
function EmptyLane({ height, line }: { height: string; line?: string }) {
  return (
    <div className={clsx('shrink-0 border-b border-[#c0c7cd]', height)}>
      {line && <div className={clsx('border-b-2 border-[#7e8284]', line)} />}
    </div>
  )
}

const rulerBars = [1, 33, 65, 97, 129, 161, 193, 225, 257, 289, 321]

function Arrangement() {
  return (
    <section className="flex min-w-0 flex-1 flex-col border-l-[3px] border-[#22303f]">
      <div className="relative h-[21px] shrink-0 overflow-hidden bg-[#5886b5]">
        <div className="absolute inset-y-0 right-0 left-[493px] bg-[#576675]" />
        <svg className="absolute inset-0 size-full" aria-hidden="true">
          {rulerBars.map((bar, i) => (
            <path key={bar} d={`M${1.5 + Math.round(i * 52.4)} 0v7`} stroke="#fff" />
          ))}
          <path d="M0 0h6L0 6zM493 0h-7l7 7z" fill="#fff" />
        </svg>
        {rulerBars.map((bar, i) => (
          <span key={bar} className="absolute top-[8px] text-[12px] leading-[14px] font-bold text-[#dceafa]" style={{ left: 1 + Math.round(i * 52.4) }}>
            {bar}
          </span>
        ))}
      </div>
      <div className="relative flex min-h-0 flex-1 flex-col overflow-hidden bg-[#dfebf3]">
        <div className="absolute inset-y-0 right-0 left-[493px] bg-[#eaeff3]" />
        <svg className="absolute inset-0 size-full" aria-hidden="true">
          {rulerBars.map((bar, i) => (
            <path key={bar} d={`M${1.5 + Math.round(i * 52.4)} 0v2000`} stroke="#b9c0c6" />
          ))}
        </svg>
        <div className="relative flex min-h-0 flex-1 flex-col">
          <div className="h-[21px] shrink-0 border-t border-b-4 border-[#22303f]" />
          <EmptyLane height="h-[20px]" />
          <EmptyLane height="h-[20px]" />
          <EmptyLane height="h-[59px]" line="h-[15px]" />
          <EmptyLane height="h-[39px]" line="h-[38px]" />
          <EmptyLane height="h-[20px]" />
          <EmptyLane height="h-[59px]" line="h-[15px]" />
          <EmptyLane height="h-[41px]" line="h-[40px]" />
          <Clip height="h-[72px]" name="Sininho Giza Ky" color="bg-[#e96b94]" notes={sininhoNotes} dark />
          <Curve height="h-[72px]" points={sininhoCurve} color="#e96b94" />
          <Clip height="h-[80px]" name="Canto Ky" color="bg-[#8d548b]" notes={cantoNotes} />
          <Curve height="h-[42px]" points={cantoCurve} color="#8d548b" />
          <Clip height="h-[98px]" name="Contracanto Ky" color="bg-[#644a8a]" notes={contraNotes} />
          <Curve height="h-[40px]" points={contraCurve} color="#644a8a" />
          <div className="h-[103px] shrink-0 border-b border-[#c0c7cd]">
            <div className="relative flex h-full w-[485px] flex-col border-t border-r-2 border-l border-t-[#f01c2c] border-r-[#3a4f78] border-l-[#19d3e6] bg-[#787878]">
              <Notes rows={gravesNotes} />
              <div className="mt-auto flex h-[15px] items-center border-y border-y-[#5681bc] bg-black">
                <span className="mt-[6px] size-[7px] bg-white" />
                <span className="flex-1 text-[11px] leading-[12px] text-white">Graves Ky</span>
                <Caret className="mt-[4px] mr-[3px] text-white" />
                <span className="mt-[6px] mr-[2px] size-[8px] bg-white" />
              </div>
            </div>
          </div>
          <Curve height="h-[45px]" points={gravesCurve} color="#5681bc" />
          <Clip height="h-[60px]" color="bg-[#644a8a]" />
        </div>
      </div>
      <div className="flex h-[15px] shrink-0 bg-[#a9b3bd]">
        <ScrollButton dir="left" className="w-[15px]" />
        <div className="h-full flex-1 border-y border-[#2e3f4d]">
          <div className="h-full w-[65%] border-x border-[#2e3f4d] bg-[#576675]" />
        </div>
        <ScrollButton dir="right" className="w-[15px]" />
        <span className="w-[4px] bg-white" />
        <button aria-label="Zoom presets" className="flex w-[14px] items-center justify-center border border-[#2e3f4d]"><Caret className="text-black" /></button>
        <ZoomH value={16} />
      </div>
    </section>
  )
}

function ProjectScroll() {
  return (
    <div className="flex w-[15px] shrink-0 flex-col bg-[#a9b3bd]">
      <div className="flex h-[21px] items-center justify-center bg-[#576675]">
        <button aria-label="Ruler format" className="flex size-[12px] items-center justify-center bg-[#8793a0]"><Caret className="text-[#3a4754]" /></button>
      </div>
      <ScrollButton dir="up" className="h-[9px]" />
      <ScrollButton dir="down" className="h-[8px]" />
      <div className="h-[4px] bg-[#22303f]" />
      <ZoomV className="h-[60px]" value={100} />
      <ScrollButton dir="up" className="h-[15px]" />
      <div className="flex min-h-0 flex-1 flex-col border-x border-[#2e3f4d]">
        <div className="h-[76%] border-y border-[#2e3f4d] bg-[#667583]" />
      </div>
      <ScrollButton dir="down" className="h-[15px]" />
      <div className="h-[4px] bg-white" />
      <button aria-label="Zoom presets" className="flex h-[12px] items-center justify-center border border-[#2e3f4d]"><Caret className="text-black" /></button>
      <ZoomV className="h-[79px]" value={14} />
      <div className="h-[16px] bg-[#f0f0f0]"><Grip /></div>
    </div>
  )
}

function ProjectWindow() {
  return (
    <article className="absolute top-[1px] bottom-[22px] left-[2px] z-20 flex w-[1013px] flex-col rounded-t-[6px] border border-t-white border-r-[#19c8e6] border-b-[#19c8e6] border-l-white bg-[#bad0ea] px-[4px] pr-[6px] pb-[6px]">
      <header className="-mr-[6px] -ml-[4px] flex h-[28px] shrink-0 items-center gap-[5px] rounded-t-[6px] bg-linear-to-b from-[#95b1d2] to-[#bcd0ea] pt-[4px] pr-[8px] pl-[7px] font-['Roboto'] text-[12px] text-black">
        <Logo />
        <h1 className="whitespace-nowrap">Cubase 5 Project - Sinfonia em KY 13 (sem proust) ESTÉREO(de12)(É ESTA - para ANSATA dança KY - 2014).cpr</h1>
        <WindowButtons active />
      </header>
      <ProjectToolbar />
      <InfoLine />
      <div className="flex min-h-0 flex-1 border-t-2 border-[#22303f] bg-[#22313f]">
        <Inspector />
        <TrackList />
        <Arrangement />
        <ProjectScroll />
      </div>
    </article>
  )
}

/* ---------- channel window peeking out behind ---------- */

const bands = [
  { name: 'eq 4', q: '7.0' },
  { name: 'eq 3', q: '0.2' },
  { name: 'eq 2', q: '0.2' },
  { name: 'eq 1', q: '7.0' },
]

function ChannelWindow() {
  return (
    <article className="absolute top-[128px] bottom-[122px] left-[900px] z-10 flex w-[144px] flex-col rounded-tr-[5px] border border-[#5c6976] bg-[#d6e2f0] pr-[6px] pb-[7px]">
      <div className="flex h-[28px] shrink-0 items-center pt-[4px]"><WindowButtons /></div>
      <div className="flex min-h-0 flex-1 flex-col items-end bg-[#22303f] text-[11px] text-[#7f95aa]">
        <svg viewBox="0 0 30 30" className="mt-[44px] mb-[2px] size-[30px] shrink-0" fill="none" aria-hidden="true">
          <circle cx="15" cy="15" r="12" stroke="#4a5d72" strokeWidth="2" />
          <path d="M8 24l7-8 7 8z" fill="#4a5d72" />
          <circle cx="15" cy="7" r="2.500" fill="#fff" />
        </svg>
        {bands.map((band) => (
          <section key={band.name} className="mb-[3px] h-[77px] w-[60px] shrink-0 text-right">
            <h3 className="h-[14px] bg-[#4a5d72] pr-[5px] leading-[14px] font-bold text-[#c4d2e0]">{band.name}</h3>
            <div className="mt-[2px] flex h-[61px] flex-col justify-around rounded-[3px] border border-[#3c4e60] bg-[#182430] pr-[4px] leading-none">
              <span>0.0</span>
              <span>Hz</span>
              <span>{band.q}</span>
            </div>
          </section>
        ))}
        <Caret className="mt-[2px] mr-[5px] text-[#7f95aa]" />
        <div className="mt-[4px] h-[15px] w-[60px] shrink-0 rounded-[2px] border-2 border-black bg-[#0b1620]" />
        <div className="mt-[3px] min-h-0 w-[60px] flex-1 rounded-[3px] border-[3px] border-[#b5bcc2] bg-[repeating-linear-gradient(#16304c_0_2px,#24486c_2px_3px)]" />
        <div className="mt-[3px] flex h-[27px] w-[60px] shrink-0 flex-col justify-between rounded-[2px] bg-black pr-[3px] text-right text-[10px] leading-[13px] text-white">
          <span>-∞</span>
          <span className="pr-[12px]">2</span>
        </div>
        <div className="mt-[7px] h-[16px] w-[60px] shrink-0 bg-[#020d1a]" />
        <div className="h-[13px] w-[60px] shrink-0 bg-[#8195ad]" />
        <ScrollButton dir="right" className="h-[15px] w-[16px]" />
      </div>
    </article>
  )
}

/* ---------- key editor ---------- */

function KeyToolbar() {
  return (
    <div className="flex h-[38px] shrink-0 items-center overflow-hidden bg-[#2d3b4b] pl-[4px]">
      <Group>
        <button aria-label="Solo editor" className="h-[23px] w-[21px] bg-[#e2e7ea] text-[15px] leading-[23px] font-black text-black">
          s<sup className="font-['Liberation_Serif'] text-[12px] font-normal text-[#808890] italic">e</sup>
        </button>
        <Cell icon="speaker" on />
      </Group>
      <Sep />
      <Group><Cell icon="info" on /></Group>
      <Sep className="mr-[5px] ml-[4px]" />
      <Group>
        <Cell icon="arrow" on />
        <Cell icon="pencil" />
        <Cell icon="erase" />
        <Cell icon="knife" />
        <Cell icon="split" />
        <Cell icon="mute" />
        <Cell icon="glue" />
        <Cell icon="zoom" />
        <Cell icon="line" drop />
        <Cell icon="warp" drop />
      </Group>
      <Sep />
      <Group>
        <Cell icon="scroll" on className="w-[22px]" />
        <Cell icon="left" on className="w-[12px]" />
      </Group>
      <Sep className="mx-[6px]" />
      <Group><Cell icon="chords" /></Group>
      <Sep className="mr-[6px] ml-[4px]" />
      <Group><Cell icon="parts" on /></Group>
      <button className="ml-[4px] h-[23px] w-[21px] shrink-0 rounded-[2px] bg-[#e2e7ea] font-['Open_Sans'] text-[14px] leading-[22px] font-bold text-[#1e2730] italic">e!</button>
      <StackedDrop label="part list" value="" className="ml-[5px] w-[65px]" />
      <Sep className="mr-[6px] ml-[4px]" />
      <Group><Cell icon="step" /></Group>
      <Sep className="mr-[5px] ml-[4px]" />
      <label className="relative flex h-[28px] w-[45px] shrink-0 flex-col rounded-[2px] bg-black px-[2px] text-[10px] leading-[11px] text-[#a9bedd]">
        <span className="border-b border-[#3c4d5c] whitespace-nowrap">ins. vel.</span>
        <input defaultValue="100" className="h-[16px] w-full bg-transparent text-center text-[11px] text-[#dbe9f4]" />
        <Caret className="absolute bottom-[6px] left-[3px]" />
        <Caret className="absolute right-[2px] bottom-[3px]" />
        <Caret className="absolute right-[2px] bottom-[11px] rotate-180" />
      </label>
      <Sep className="mr-[6px] ml-[4px]" />
      <Group><Cell icon="snap" on /></Group>
      <button aria-label="Grid" className="mr-[8px] ml-[7px] flex h-[18px] w-[78px] shrink-0 items-center justify-center rounded-[2px] bg-black pr-[8px] text-[#cfe6f2]">
        <Icon name="grid" />
      </button>
      <StackedDrop label="quantize" value="1/16" className="w-[85px]" />
      <StackedDrop label="length Q" value="Quantize Link" className="ml-[4px] w-[85px]" />
    </div>
  )
}

const octaves = [7, 6, 5, 4, 3, 2, 1, 0, -1, -2]
const octaveHeight = 93.3
// bottom edge of an octave, measured from the top of the roll
const octaveBottom = (octave: number) => Math.round(648 - octave * octaveHeight)

function Keyboard() {
  return (
    <div className="relative w-[48px] shrink-0 overflow-hidden border-l-2 border-[#8b97a2] bg-[#dedede]">
      <svg className="absolute inset-0 size-full" aria-hidden="true">
        {octaves.map((octave) => {
          const b = octaveBottom(octave) + 2
          return (
            <g key={octave}>
              {[0, 40].map((o) => <path key={o} d={`M0 ${b - o}h48`} stroke="#000" strokeWidth="1" shapeRendering="crispEdges" />)}
              {[14, 28, 54, 68, 81].map((o) => <path key={o} d={`M26 ${b - o}h22`} stroke="#000" strokeWidth="1" shapeRendering="crispEdges" />)}
              {[17, 34, 57, 72, 87].map((o) => (
                <rect key={o} x="1" y={b - o} width="26" height="8" fill={octave === 1 && o === 57 ? '#8a8a8a' : '#000'} stroke={octave === 1 && o === 57 ? '#444' : 'none'} />
              ))}
            </g>
          )
        })}
        <path d="M45.500 0v2000" stroke="#3b4855" strokeWidth="2" />
      </svg>
      {octaves.slice(1).map((octave) => (
        <span key={octave} className="absolute right-[4px] bg-[#dedede] text-[10px] leading-[9px] text-black" style={{ top: octaveBottom(octave) - 10 }}>
          C{octave}
        </span>
      ))}
    </div>
  )
}

const smallNotes: Point[] = [[109, 494], [207, 494], [304, 501], [434, 501], [174, 534], [141, 561], [244, 581], [336, 541], [401, 541], [368, 601], [493, 521], [591, 521], [558, 561], [525, 581], [628, 601]]
const longNotes = [
  { x: 239, y: 371, w: 39, color: '#6a10a0' },
  { x: 282, y: 405, w: 39, color: '#6a10a0' },
  { x: 428, y: 351, w: 66, color: '#3c14d8' },
  { x: 493, y: 345, w: 39, color: '#4412c8' },
  { x: 693, y: 631, w: 900, color: '#c4002c' },
]
const barStep = 86.45

function BeatLines({ height }: { height: number }) {
  return (
    <>
      {Array.from({ length: 149 }, (_, i) => {
        const color = i % 16 === 0 ? '#b4bcc3' : i % 4 === 0 ? '#ccd3d9' : '#dbe2e8'
        return <path key={i} d={`M${Math.round((i * barStep) / 16) + 0.5} 0v${height}`} stroke={color} />
      })}
    </>
  )
}

function PianoRoll() {
  return (
    <div className="min-w-0 flex-1 overflow-hidden border-l border-[#e8e8a8] bg-[#ebf0f4]">
      <svg className="size-full" aria-hidden="true">
        {octaves.map((octave) => {
          const b = octaveBottom(octave)
          return (
            <g key={octave}>
              {[16, 31, 54, 70, 84].map((o) => <rect key={o} x="0" y={b - o} width="100%" height="6" fill="#d9e1e8" />)}
            </g>
          )
        })}
        <BeatLines height={2000} />
        {octaves.map((octave) => (
          <path key={octave} d={`M0 ${octaveBottom(octave) + 0.5}h2000M0 ${octaveBottom(octave) - 39.5}h2000`} stroke="#c3cad0" />
        ))}
        {smallNotes.map(([x, y]) => (
          <g key={x + '-' + y}>
            <rect x={x - 1} y={y - 3} width="6" height="7" />
            <rect x={x} y={y - 2} width="4" height="4" fill="#e0102a" />
          </g>
        ))}
        {longNotes.map((note) => (
          <g key={note.x}>
            <rect x={note.x - 1} y={note.y} width={note.w} height="7" />
            <rect x={note.x} y={note.y + 1} width={note.w - 2} height="4" fill={note.color} />
          </g>
        ))}
      </svg>
    </div>
  )
}

const velocities = [
  [109, 19], [142, 19], [174, 19], [207, 19], [244, 19], [304, 17], [336, 17], [369, 17], [401, 17], [434, 17],
  [493, 19], [526, 19], [558, 19], [591, 19], [628, 19], [693, 17],
]

function KeyEditor() {
  return (
    <article className="absolute top-[2px] right-[2px] bottom-[11px] left-[1044px] z-10 flex flex-col rounded-t-[6px] border border-[#5c6976] bg-[#d6e4f2] pr-[6px] pb-[5px] pl-[6px]">
      <header className="-mx-[6px] flex h-[28px] shrink-0 items-center gap-[5px] rounded-t-[6px] border-t border-white bg-linear-to-b from-[#bccad8] to-[#d6e2ee] px-[8px] pt-[3px] font-['Roboto'] text-[12px] text-[#4a4f55]">
        <Logo />
        <h1>Key Editor: Graves Ky</h1>
        <WindowButtons />
      </header>
      <KeyToolbar />
      <p className="h-[32px] shrink-0 border-y-2 border-l-2 border-[#a9b3bd] bg-black pl-[7px] text-[11px] leading-[28px] text-[#dbe9f4]">No Object Selected</p>
      <div className="flex h-[22px] shrink-0 border-b border-[#8b97a2] bg-[#a9b3bd]">
        <div className="relative ml-[50px] flex-1 overflow-hidden bg-[#5886b5]">
          <svg className="absolute inset-0 size-full" aria-hidden="true">
            {Array.from({ length: 37 }, (_, i) => (
              <path key={i} d={`M${Math.round((i * barStep) / 4) + 0.5} 0v${i % 4 ? 5 : 8}`} stroke={i % 4 ? '#c3cdd8' : '#fff'} />
            ))}
            <path d="M0 0h7L0 7z" fill="#fff" />
          </svg>
          <span className="absolute bottom-0 left-0 h-[13px] w-[60px] border border-b-0 border-[#b6ccdb] bg-[#526a7c] pl-[2px] text-[11px] leading-[13px] text-[#dceafa]">Graves Ky</span>
          {[1, 2, 3, 4, 5, 6, 7, 8, 9].map((bar) => (
            <span key={bar} className="absolute top-[9px] text-[12px] leading-[13px] font-bold text-[#dceafa]" style={{ left: Math.round(bar * barStep) }}>
              {bar}
            </span>
          ))}
        </div>
        <div className="flex w-[15px] items-center justify-center bg-[#576675]">
          <button aria-label="Ruler format" className="flex size-[12px] items-center justify-center bg-[#8793a0]"><Caret className="text-[#3a4754]" /></button>
        </div>
      </div>
      <div className="flex min-h-0 flex-1 bg-[#a9b3bd]">
        <Keyboard />
        <div className="w-px bg-[#3b4855]" />
        <PianoRoll />
        <div className="flex w-[15px] shrink-0 flex-col">
          <ScrollButton dir="up" className="h-[16px]" />
          <div className="flex min-h-0 flex-1 flex-col justify-end border-x border-[#2e3f4d]">
            <div className="h-[83%] border-y border-[#2e3f4d] bg-[#667583]" />
          </div>
          <ScrollButton dir="down" className="h-[16px]" />
          <ZoomV className="h-[79px]" value={26} />
        </div>
      </div>
      <div className="flex h-[26px] shrink-0 bg-[#a9b3bd] pt-[2px]">
        <div className="w-[49px] shrink-0">
          <label className="relative flex h-[13px] w-[47px] items-center bg-black">
            <select aria-label="Controller lane" className="h-full w-full appearance-none bg-transparent pl-px text-[11px] leading-none text-white">
              <option>Velocit</option>
            </select>
            <span className="absolute right-0 flex h-[12px] w-[10px] items-center justify-center bg-[#dedede]"><Caret className="text-black" /></span>
          </label>
        </div>
        <div className="min-w-0 flex-1 overflow-hidden border-t border-l border-[#3b4855] bg-[#ebf0f4]">
          <svg className="size-full" aria-hidden="true">
            <BeatLines height={30} />
            {velocities.map(([x, h]) => (
              <rect key={x} x={x} y={23 - h} width="3" height={h} fill={h === 19 ? '#e01020' : '#c80a3c'} stroke="#5a2030" strokeWidth="0.500" />
            ))}
            <path d="M238 13h3v10h-3zM282 13h3v10h-3z" fill="#5c1490" />
            <path d="M428 17h3v6h-3zM493 17h3v6h-3z" fill="#3c14d8" />
          </svg>
        </div>
        <div className="flex w-[15px] shrink-0 flex-col">
          <ScrollButton dir="up" className="h-[12px]" />
          <ScrollButton dir="down" className="h-[12px]" />
        </div>
      </div>
      <div className="flex h-[16px] shrink-0 bg-[#a9b3bd]">
        <button aria-label="Controller presets" className="ml-[35px] flex w-[14px] items-center justify-center border border-[#2e3f4d]"><Caret className="text-black" /></button>
        <ScrollButton dir="left" className="w-[16px]" />
        <div className="flex-1 border-y border-[#2e3f4d]">
          <div className="h-full w-[20px] border-x border-[#2e3f4d] bg-[#576675]" />
        </div>
        <ScrollButton dir="right" className="w-[16px]" />
        <ZoomH value={56} />
        <Grip />
      </div>
    </article>
  )
}

/* ---------- transport panel ---------- */

function Screen({ children, className }: { children?: ReactNode; className?: string }) {
  return <div className={clsx('relative h-full shrink-0 overflow-hidden rounded-t-[2px] bg-black', className)}>{children}</div>
}

function TransportPanel() {
  const chip = 'h-[13px] bg-[#3d5670] px-[2px] text-[#9fb6cc]'
  return (
    <footer className="absolute bottom-0 left-[39px] z-30 flex h-[34px] gap-[6px] border-t border-[#8aa2ba] bg-linear-to-b from-[#617d99] to-[#4d6883] pt-[4px] text-[10px] leading-[13px] text-[#8fa3b5]">
      <div className="w-[13px] border-r border-[#2c4257] text-center text-[#22384c]">
        <svg viewBox="0 0 8 8" className="mx-auto size-[7px]" fill="none" stroke="currentColor" aria-hidden="true"><path d="M0 .5h8M0 7.500h8M1 6l3-3 3 3" /></svg>
      </div>
      <Screen className="w-[357px]">
        <svg viewBox="0 0 357 30" className="absolute inset-0 size-full" fill="none" stroke="#6583a2" strokeWidth="2" aria-hidden="true">
          <path d="M8 7h8v23H8zM17 7h8v23h-8z" fill="#1a2026" stroke="none" />
          {[60, 98, 174, 212, 250].map((x) => (
            <path key={x} d={`M${x} 24V11q0-5 5-5h28q5 0 5 5v13`} />
          ))}
          {[32, 70, 108, 146, 184, 222, 260, 298].map((x) => (
            <path key={x} d={`M${x} 30q0-5 5-5h28q5 0 5 5`} />
          ))}
          <path d="M343 7v18" strokeWidth="1" />
          <path d="M351 17v10l-6-5z" fill="#8ca6c0" stroke="none" />
        </svg>
        {[['2', 65], ['3', 103], ['5', 180], ['6', 218], ['7', 256]].map(([key, left]) => (
          <span key={key} className="absolute top-[9px] font-['DejaVu_Sans'] text-[11px] font-bold text-white" style={{ left }}>{key}</span>
        ))}
      </Screen>
      <Screen className="flex w-[14px] justify-center gap-[2px] pt-[2px]">
        <span className="w-[4px] bg-[#222a32]" />
        <span className="w-[4px] bg-[#222a32]" />
      </Screen>
      <Screen className="w-[84px] pl-[3px] text-[11px]">
        {['Normal', 'Mix (MIDI)'].map((mode) => (
          <div key={mode} className="flex h-[23px] items-center gap-[4px] pt-[2px]">
            <svg viewBox="0 0 16 16" className="size-4 shrink-0" fill="none" aria-hidden="true">
              <circle cx="5" cy="5" r="3" stroke="#a01810" strokeWidth="3" />
              <path d="M2 12h14M11 9v6" stroke="#b08a84" />
            </svg>
            <span className="flex-1 whitespace-nowrap text-[#8296a8]">{mode}</span>
            <Caret className="mr-[3px] text-[#4a6478]" />
          </div>
        ))}
      </Screen>
      <Screen className="w-[115px] pt-px pl-px">
        <div className="flex h-[14px] items-center">
          <span className="h-[13px] w-[19px] bg-[#3d5670]">
            <svg viewBox="0 0 19 13" className="size-full" fill="none" stroke="#9db4cb" aria-hidden="true"><path d="M6 2v8h7" /></svg>
          </span>
          <span className="flex-1 pr-[3px] text-right text-[12px] font-bold whitespace-pre text-[#dff0f2]">0.  1.  1.    0</span>
        </div>
        <div className="mt-px flex items-center">
          <span className="h-[13px] w-[19px] bg-[#3d5670]">
            <svg viewBox="0 0 19 13" className="size-full" fill="none" stroke="#9db4cb" aria-hidden="true"><path d="M3 3h4l5 6h5" /></svg>
          </span>
          <span className="flex-1 pr-[6px] text-right text-[11px] whitespace-pre text-[#50606c]">0.    0</span>
          <span className="flex h-[13px] w-[17px] bg-[#3d5670]">
            <svg viewBox="0 0 17 13" className="size-full" fill="none" stroke="#9db4cb" aria-hidden="true"><path d="M3 2v9M6 2v9M9 2v9l5-4.500z" /></svg>
          </span>
        </div>
      </Screen>
      <Screen className="w-[272px] px-[3px]">
        <div className="flex h-[22px] items-center pt-[3px] pl-[1px]">
          <svg viewBox="0 0 8 16" className="h-4 w-2" fill="none" stroke="#5b8282" strokeWidth="1.500" aria-hidden="true"><path d="M0 4h8M4 0v8M0 14h8" /></svg>
          <span className="ml-[34px] text-[15px] font-bold whitespace-pre text-[#dff0f2]">0.  1.  1.    0</span>
          <svg viewBox="0 0 28 20" className="ml-[10px] h-5 w-7" aria-hidden="true">
            <ellipse cx="4" cy="14" rx="4" ry="3" fill="#4d6478" />
            <path d="M7.500 14V4M24 2v16M22 4l2-3 2 3M22 16l2 3 2-3" stroke="#4d6478" strokeWidth="1.500" fill="none" />
          </svg>
          <span className="mr-[4px] ml-auto text-[12px] font-bold text-[#c3d8ee]">0:00:00.000</span>
          <svg viewBox="0 0 12 12" className="mr-[3px] size-[11px]" aria-hidden="true"><circle cx="6" cy="6" r="5.500" fill="#51697e" /><path d="M6 2v4h3" stroke="#0b1117" fill="none" strokeWidth="1.500" /></svg>
        </div>
        <div className="mt-px h-[4px] border-l-2 border-[#58b868] bg-[#1e2a35]" />
      </Screen>
      <Screen className="w-[112px] text-[10px]">
        <div className="flex h-[14px] items-center gap-[4px] border-b border-[#41616e]"><span className={clsx(chip, 'w-[35px] text-center')}>CLICK</span><span>OFF</span><span className={clsx(chip, 'ml-auto')}>II✳</span></div>
        <div className="mt-px flex items-center gap-[4px]"><span className={clsx(chip, 'w-[38px]')}>TEMPO</span><span>FIXED</span><span className="ml-auto pr-[3px] text-[12px] font-bold text-[#c3d8ee]">4/4</span></div>
      </Screen>
      <Screen className="w-[91px] px-[2px] text-[10px]">
        <div className="flex h-[14px] items-center justify-between border-b border-[#41616e]"><span className={chip}>SHOW</span><span>MARKER</span></div>
        <div className="mt-px flex justify-between px-[5px]">{[1, 2, 3, 4, 5].map((m) => <span key={m}>{m}</span>)}</div>
      </Screen>
      <Screen className="flex w-[13px] justify-center gap-[2px] pt-[2px]">
        <span className="w-[4px] bg-[#222a32]" />
        <span className="w-[4px] bg-[#222a32]" />
      </Screen>
      <Screen className="grid w-[38px] grid-cols-2 gap-[2px] p-[2px]">
        {[1, 2, 3, 4].map((pad) => <span key={pad} className="bg-[#2a333c]" />)}
      </Screen>
      <div className="w-[9px] rounded-t-full border border-[#1d3042] bg-[#3e566e] pt-[11px]"><span className="mx-auto block size-[6px] rounded-full bg-[#dfe8f0]" /></div>
      <div className="w-[15px] border-l border-[#2c4257] text-[#22384c]">
        <svg viewBox="0 0 8 8" className="mx-auto size-[7px]" fill="none" stroke="currentColor" aria-hidden="true"><path d="M0 .5h8M0 7.500h8M1 6l3-3 3 3" /></svg>
      </div>
    </footer>
  )
}

export default function App() {
  return (
    <div className="relative flex h-screen flex-col overflow-hidden bg-[#1f2c38] font-['Liberation_Sans',sans-serif]">
      <header className="flex h-[22px] shrink-0 items-start border-t border-b border-t-[#33475a] border-b-[#52697e] bg-[#b2cee6] bg-linear-to-r from-[#d3e4f2] to-[#b2cee6] to-[200px] pl-[2px] font-['Roboto'] text-[12px] text-black">
        <div className="flex h-full items-center gap-[5px]">
          <Logo />
          Cubase 5
        </div>
        <div className="mr-[3px] ml-auto flex h-[17px] overflow-hidden rounded-b-[4px] border border-t-0 border-[#46586b]">
          <button aria-label="Minimize application" className="flex w-[27px] items-center justify-center border-r border-[#46586b] bg-[#a9bfd4]">
            <span className="h-[4px] w-[11px] border border-[#46586b] bg-white" />
          </button>
          <button aria-label="Restore application" className="flex w-[27px] items-center justify-center border-r border-[#46586b] bg-[#a9bfd4]">
            <svg viewBox="0 0 12 12" className="size-3" fill="#fff" stroke="#46586b" aria-hidden="true"><path d="M3.500 .5h8v8h-8zM.5 3.500h8v8h-8zM3.500 6.500h2v2h-2z" /></svg>
          </button>
          <button aria-label="Close application" className="flex w-[46px] items-center justify-center bg-linear-to-b from-[#d88070] to-[#bf3418]"><CloseMark /></button>
        </div>
      </header>
      <nav className="flex h-[22px] shrink-0 items-center gap-[14px] border-b-2 border-[#8a8f9c] bg-linear-to-b from-white via-[#d8dff0] to-[#e3e7f6] pl-[7px] font-['Roboto'] text-[12px] text-black">
        {menus.map((menu) => (
          <button key={menu} className="whitespace-nowrap">{menu}</button>
        ))}
      </nav>
      <main className="relative min-h-0 flex-1 border-l-2 border-[#c9ccd0]">
        <div className="absolute inset-0 -left-[2px]">
          <ChannelWindow />
          <KeyEditor />
          <ProjectWindow />
        </div>
      </main>
      <div className="flex h-[19px] shrink-0 items-center border border-[#d5d5d5] bg-[#f2f2f2] px-[6px]">
        <svg viewBox="0 0 5 8" className="h-2 w-[5px]" aria-hidden="true"><path d="M5 0L0 4l5 4z" fill="#444" /></svg>
        <div className="mr-[14px] ml-[17px] h-[15px] flex-1 rounded-[2px] border border-[#979797] bg-linear-to-b from-[#f4f4f4] to-[#cfcfcf]" />
        <svg viewBox="0 0 5 8" className="h-2 w-[5px]" aria-hidden="true"><path d="M0 0l5 4-5 4z" fill="#444" /></svg>
      </div>
      <TransportPanel />
    </div>
  )
}
